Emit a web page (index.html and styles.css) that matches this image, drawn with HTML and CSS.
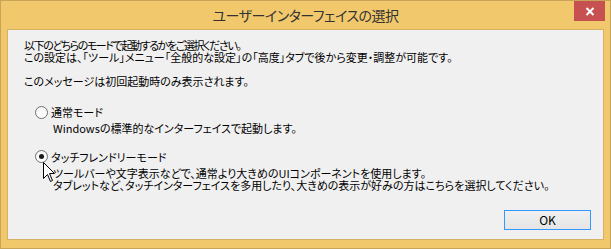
FILE: index.html
```html
<!DOCTYPE html>
<html lang="ja">
<head>
<meta charset="utf-8">
<title>ユーザーインターフェイスの選択</title>
<link rel="stylesheet" href="styles.css">
</head>
<body>
<div class="window">
  <div class="titlebar">
    <div class="title">ユーザーインターフェイスの選択</div>
    <div class="close">
      <svg width="10" height="9" viewBox="0 0 10 9"><path d="M1.5 1 L8.5 8 M8.5 1 L1.5 8" stroke="#fff" stroke-width="2" fill="none"/></svg>
    </div>
  </div>
  <div class="client">
    <p class="intro"><span class="tight">以下のどちらのモードで起動するかをご選択ください。</span><br>この設定は、「ツール」メニュー「全般的な設定」の「高度」タブで後から変更・調整が可能です。</p>
    <p class="note">このメッセージは初回起動時のみ表示されます。</p>
    <div class="option opt1">
      <div class="radio-row"><span class="radio"></span><span class="label">通常モード</span></div>
      <div class="desc">Windowsの標準的なインターフェイスで起動します。</div>
    </div>
    <div class="option opt2">
      <div class="radio-row"><span class="radio checked"></span><span class="label">タッチフレンドリーモード</span></div>
      <div class="desc">ツールバーや文字表示などで、通常より大きめのUIコンポーネントを使用します。<br>タブレットなど、タッチインターフェイスを多用したり、大きめの表示が好みの方はこちらを選択してください。</div>
      <svg class="cursor" width="13" height="21" viewBox="0 0 13 21"><path d="M0.5 0.5 L0.5 16.5 L4.5 12.5 L7.5 19.5 L9.5 18.5 L6.5 11.5 L11.5 11.5 Z" fill="#fff" stroke="#000" stroke-width="1"/></svg>
    </div>
    <div class="footer">
      <button class="ok">OK</button>
    </div>
  </div>
</div>
</body>
</html>
```
FILE: styles.css
```css
html, body {
  margin: 0;
  padding: 0;
  background: #f1c96c;
}
.window {
  width: 611px;
  height: 249px;
  box-sizing: border-box;
  border: 1px solid #c7a457;
  background: #f1c96c;
  display: flex;
  flex-direction: column;
  font-family: "Noto Sans CJK JP", "Noto Sans", sans-serif;
}
.titlebar {
  height: 29px;
  display: grid;
  grid-template-columns: 1fr auto 1fr;
  align-items: start;
}
.title {
  grid-column: 2;
  font-size: 14px;
  line-height: 28px;
  color: #333;
  letter-spacing: -0.5px;
  font-feature-settings: "palt";
}
.close {
  grid-column: 3;
  justify-self: end;
  margin-right: 5px;
  width: 31px;
  height: 20px;
  background: #c75050;
  display: flex;
  align-items: center;
  justify-content: center;
}
.close svg { display: block; }
.client {
  margin: 0 6px 8px 6px;
  height: 208px;
  border: 1px solid #d6b263;
  background: #f0f0f0;
  padding: 9px 12px 0 16px;
  font-size: 11px;
  line-height: 12px;
  color: #000;
  font-feature-settings: "palt";
  display: flex;
  flex-direction: column;
}
p { margin: 0; }
.tight { letter-spacing: -1.4px; }
.note { margin-top: 12px; }
.option { position: relative; }
.opt1 { margin-top: 19px; }
.opt2 { margin-top: 16px; }
.radio-row {
  display: flex;
  align-items: center;
  height: 12px;
  padding-left: 11px;
}
.radio {
  width: 13px;
  height: 13px;
  box-sizing: border-box;
  border: 1px solid #707070;
  border-radius: 50%;
  background: linear-gradient(#f4f4f4, #ffffff);
  margin-right: 3px;
  display: flex;
  align-items: center;
  justify-content: center;
}
.radio.checked::after {
  content: "";
  width: 5px;
  height: 5px;
  border-radius: 50%;
  background: #1a1a1a;
}
.desc {
  margin-top: 4px;
  padding-left: 29px;
  line-height: 12.5px;
}
.cursor {
  position: absolute;
  left: 19px;
  top: 11px;
}
.footer {
  margin-top: auto;
  margin-bottom: 9px;
  display: flex;
  justify-content: flex-end;
}
.ok {
  width: 87px;
  height: 20px;
  box-sizing: border-box;
  border: 1px solid #3399ff;
  background: linear-gradient(#f0f0f0, #e5e5e5);
  font-family: "Noto Sans CJK JP", "Noto Sans", sans-serif;
  font-size: 12px;
  line-height: 16px;
  color: #000;
  padding: 0;
}
```
